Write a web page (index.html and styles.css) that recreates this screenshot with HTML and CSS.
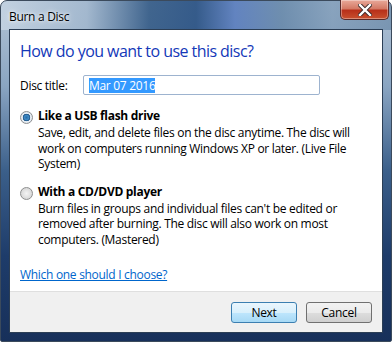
FILE: index.html
```html
<!DOCTYPE html>
<html lang="en">
<head>
  <meta charset="UTF-8">
  <title>Burn a Disc</title>
  <link rel="stylesheet" href="styles.css">
</head>
<body>

<div class="window">
  <div class="titlebar">
    <span class="title">Burn a Disc</span>
    <button class="close-btn" title="Close">
      <svg width="14" height="12" viewBox="0 0 14 12">
        <path d="M2 1 L12 11 M12 1 L2 11" stroke="#3a2a2a" stroke-width="4.2" stroke-linecap="square"/>
        <path d="M2 1 L12 11 M12 1 L2 11" stroke="#fff" stroke-width="2.4" stroke-linecap="square"/>
      </svg>
    </button>
  </div>

  <div class="client">
    <div class="content">
      <h1 class="instruction">How do you want to use this disc?</h1>

      <div class="title-row">
        <label for="discTitle">Disc title:</label>
        <div class="text-box" id="discTitle"><span class="selected">Mar 07 2016</span></div>
      </div>

      <div class="option">
        <span class="radio checked"></span>
        <div class="option-text">
          <div class="option-name">Like a USB flash drive</div>
          <div class="option-desc">Save, edit, and delete files on the disc anytime. The disc will work on computers running Windows XP or later. (Live File System)</div>
        </div>
      </div>

      <div class="option">
        <span class="radio"></span>
        <div class="option-text">
          <div class="option-name">With a CD/DVD player</div>
          <div class="option-desc">Burn files in groups and individual files can't be edited or removed after burning. The disc will also work on most computers. (Mastered)</div>
        </div>
      </div>

      <a class="help-link" href="#">Which one should I choose?</a>
    </div>

    <div class="footer">
      <button class="btn default">Next</button>
      <button class="btn">Cancel</button>
    </div>
  </div>
</div>

</body>
</html>
```

FILE: styles.css
```css
body {
  margin: 0;
  font-family: "Open Sans", "Noto Sans", sans-serif;
  font-size: 12px;
  letter-spacing: -0.3px;
  color: #000;
  background: #fff;
}
.window {
  width: 392px;
  height: 342px;
  box-sizing: border-box;
  padding: 0 8px 8px 8px;
  border: 1px solid #3b4a5c;
  border-radius: 7px 7px 2px 2px;
  display: flex;
  flex-direction: column;
  background:
    linear-gradient(90deg, rgba(195,210,225,0.95) 0%, rgba(160,182,205,0.8) 22%, rgba(45,85,130,0.85) 38%, rgba(40,80,130,0.9) 50%, rgba(90,125,190,0.9) 60%, rgba(95,130,165,0.8) 72%, rgba(120,150,180,0.7) 85%, rgba(110,140,170,0.8) 100%) top / 100% 29px no-repeat,
    linear-gradient(180deg, #b3c4d6 0%, #8aa5c2 25%, #3b5f8a 50%, #1e3c6a 75%, #17305a 100%);
}
.titlebar {
  height: 28px;
  display: flex;
  align-items: flex-start;
  justify-content: space-between;
}
.title {
  margin-top: 7px;
  font-size: 12px;
  color: #000;
  text-shadow: 0 0 6px rgba(255,255,255,0.9), 0 0 3px rgba(255,255,255,0.9);
}
.close-btn {
  width: 49px;
  height: 20px;
  margin: -1px -6px 0 0;
  padding: 0;
  border: 1px solid #5a2a2a;
  border-top: none;
  border-radius: 0 0 5px 5px;
  background: linear-gradient(180deg, #e9a99a 0%, #d47a66 45%, #b8301a 55%, #c8502e 100%);
  box-shadow: inset 0 0 0 1px rgba(255,255,255,0.35);
  display: flex;
  align-items: center;
  justify-content: center;
}
.client {
  flex: 1;
  display: flex;
  flex-direction: column;
  border: 1px solid #2b3e55;
  background: #fff;
}
.content {
  flex: 1;
  padding: 10px 10px 0 10px;
}
.instruction {
  margin: 0 0 13px 0;
  font-size: 16px;
  letter-spacing: -0.55px;
  font-weight: normal;
  color: #1338b8;
}
.title-row {
  display: flex;
  align-items: center;
  gap: 10px;
  margin-bottom: 13px;
}
.title-row label {
  width: 53px;
}
.text-box {
  width: 225px;
  height: 18px;
  border: 1px solid #9db3cf;
  border-radius: 2px;
  padding: 0 5px;
  display: flex;
  align-items: center;
}
.selected {
  background: #3399ff;
  color: #fff;
  line-height: 15px;
}
.option {
  display: flex;
  gap: 5px;
  margin-bottom: 12px;
}
.radio {
  width: 11px;
  height: 11px;
  margin-top: 3px;
  border: 1px solid #8e8f8f;
  border-radius: 50%;
  background: radial-gradient(circle, #f4f4f4 0%, #d9d9d9 70%, #c8c8c8 100%);
  flex: none;
}
.radio.checked {
  background: radial-gradient(circle, #2b6ea6 0, #3e8ac6 30%, #1a4f80 45%, #e9eff5 52%, #cfdae6 100%);
}
.option-name {
  font-weight: bold;
  line-height: 16px;
}
.option-desc {
  margin-top: 1px;
  line-height: 15.6px;
}
.help-link {
  display: inline-block;
  margin-top: 6px;
  color: #0066cc;
  text-decoration: underline;
}
.footer {
  height: 40px;
  background: #f0f0f0;
  border-top: 1px solid #dfdfdf;
  display: flex;
  align-items: center;
  justify-content: flex-end;
  gap: 9px;
  padding-right: 10px;
}
.btn {
  width: 66px;
  height: 21px;
  font-family: inherit;
  font-size: 12px;
  letter-spacing: inherit;
  border: 1px solid #707070;
  border-radius: 3px;
  background: linear-gradient(180deg, #f2f2f2 0%, #ebebeb 50%, #dddddd 51%, #cfcfcf 100%);
  padding: 0;
}
.btn.default {
  border-color: #3c7fb1;
  background: linear-gradient(180deg, #eaf6fd 0%, #d9f0fc 50%, #bee6fd 51%, #a7d9f5 100%);
}
```
